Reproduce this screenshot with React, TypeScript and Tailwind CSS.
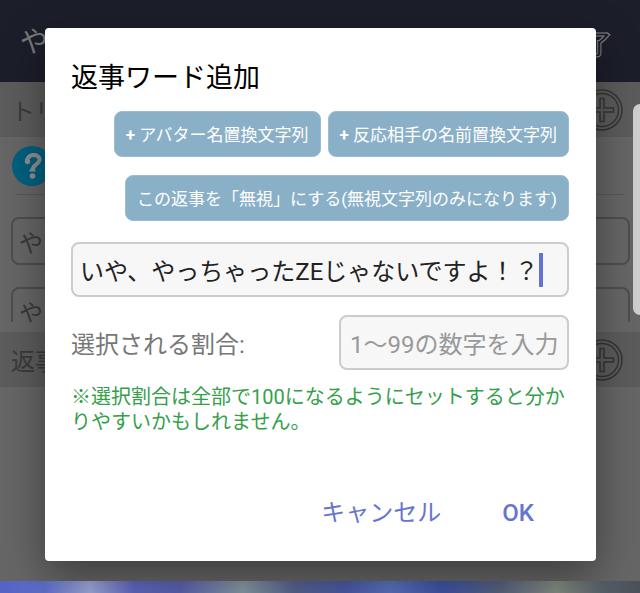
import React, { useState } from "react";

const TRIGGER_WORDS = ["やっ", "やっ"];

type SectionBarProps = {
  title: string;
  addLabel: string;
};

type DialogProps = {
  word: string;
  onWordChange: (value: string) => void;
  rate: string;
  onRateChange: (value: string) => void;
};

export default function App() {
  const [word, setWord] = useState("いや、やっちゃったZEじゃないですよ！？");
  const [rate, setRate] = useState("");

  return (
    <div className="relative flex min-h-screen flex-col overflow-hidden bg-[#666666] font-[Roboto,'Noto_Sans_CJK_JP',sans-serif] text-[#3a3a3a]">
      <header className="flex h-[82px] items-center justify-between bg-[#1c1e2a] pt-1 pr-7 pl-5 text-[#77777c]">
        <h1 className="text-[28px]">やっ</h1>
        <button
          type="button"
          className="pt-1 text-[26px] font-bold text-[#1c1e2a] [-webkit-text-stroke:1px_#85858a]"
        >
          完了
        </button>
      </header>
      <main className="flex flex-1 flex-col">
        <SectionBar title="トリガー" addLabel="トリガーワードを追加" />
        <div className="mx-4 flex h-[58px] items-center border-b border-[#585858] pr-2">
          <HelpIcon />
        </div>
        <div className="flex h-[127px] flex-col gap-[22px] overflow-hidden pt-[22px] pr-[10px] pl-[11px]">
          {TRIGGER_WORDS.map((trigger, index) => (
            <input
              key={index}
              aria-label="トリガーワード"
              defaultValue={trigger}
              className="h-12 w-full shrink-0 rounded-lg border-2 border-[#4e4e4e] px-1.5 text-2xl"
            />
          ))}
        </div>
        <div className="h-[10px]" />
        <SectionBar title="返事" addLabel="返事ワードを追加" />
      </main>
      <div className="h-3 bg-[linear-gradient(90deg,#5563c4_0%,#5f70cc_7%,#a0aadb_14%,#6067c0_21%,#5a62b0_28%,#8799a3_38%,#56638f_46%,#4a5aa5_54%,#5a72bd_61%,#3f53a6_69%,#56627e_78%,#868d83_87%,#56606a_94%,#4c5058_100%)]" />
      <div className="absolute top-[104px] right-0 h-[211px] w-[7px] rounded-l-lg bg-[#cfcfcf]" />
      <div className="absolute inset-0 flex items-start pt-7 pr-11 pl-[45px]">
        <ReplyWordDialog word={word} onWordChange={setWord} rate={rate} onRateChange={setRate} />
      </div>
    </div>
  );
}

function ReplyWordDialog({ word, onWordChange, rate, onRateChange }: DialogProps) {
  return (
    <div
      role="dialog"
      aria-labelledby="dialog-title"
      className="w-full rounded-sm bg-white pt-[30px] pr-[27px] pb-6 pl-[26px] shadow-[0_16px_44px_rgba(0,0,0,0.4)]"
    >
      <h2 id="dialog-title" className="text-[27px] leading-10 text-black">
        返事ワード追加
      </h2>
      <div className="mt-[13px] flex flex-wrap justify-end gap-x-[7px] gap-y-[18px]">
        <InsertButton>
          <b className="font-bold">+</b> アバター名置換文字列
        </InsertButton>
        <InsertButton>
          <b className="font-bold">+</b> 反応相手の名前置換文字列
        </InsertButton>
        <InsertButton>この返事を「無視」にする(無視文字列のみになります)</InsertButton>
      </div>
      <label className="mt-[21px] flex h-[55px] items-center rounded-lg border-2 border-[#cccccc] bg-[#f7f7f7] pl-[7px]">
        <input
          aria-label="返事ワード"
          value={word}
          onChange={(event) => onWordChange(event.target.value)}
          className="field-sizing-content pt-1 text-2xl text-[#222222] outline-none"
        />
        <span className="h-[34px] w-1 shrink-0 bg-[#6273d0]" />
      </label>
      <div className="mt-[18px] flex items-center justify-between">
        <label htmlFor="rate" className="pt-1 text-2xl text-[#777777]">
          選択される割合:
        </label>
        <input
          id="rate"
          value={rate}
          onChange={(event) => onRateChange(event.target.value)}
          placeholder="1〜99の数字を入力"
          className="h-[55px] w-[230px] rounded-lg border-2 border-[#cccccc] bg-[#f7f7f7] px-[9px] pt-1 text-2xl text-[#222222] placeholder:text-[#999999]"
        />
      </div>
      <p className="mt-[15px] text-xl leading-[25px] text-[#35a04a]">
        ※選択割合は全部で100になるようにセットすると分かりやすいかもしれません。
      </p>
      <div className="mt-[54px] flex justify-end gap-[5px] pr-[7px] text-2xl text-[#6675d0]">
        <button type="button" className="h-12 px-7">
          キャンセル
        </button>
        <button type="button" className="h-12 px-7 font-medium">
          OK
        </button>
      </div>
    </div>
  );
}

function InsertButton({ children }: { children: React.ReactNode }) {
  return (
    <button
      type="button"
      className="h-[46px] rounded-lg border border-[#9dbccf] bg-[#8ab0c8] px-[11px] pt-1 text-[17px] text-white"
    >
      {children}
    </button>
  );
}

function SectionBar({ title, addLabel }: SectionBarProps) {
  return (
    <div className="flex h-[55px] items-center justify-between bg-[#5c5c5c] pr-[17px] pl-[11px]">
      <h2 className="pt-1 text-2xl">{title}</h2>
      <button type="button" aria-label={addLabel}>
        <PlusIcon />
      </button>
    </div>
  );
}

function PlusIcon() {
  return (
    <svg width="42" height="42" viewBox="0 0 42 42" fill="none" stroke="#363636" strokeWidth="1.5">
      <circle cx="21" cy="21" r="20" />
      <circle cx="21" cy="21" r="16.5" />
      <path d="M19 9.5h4v9.5h9.5v4h-9.5v9.5h-4v-9.5h-9.5v-4h9.5z" />
    </svg>
  );
}

function HelpIcon() {
  return (
    <svg width="40" height="40" viewBox="0 0 40 40" className="-ml-1" role="img" aria-label="ヘルプ">
      <circle cx="20" cy="20" r="20" fill="#006080" />
      <path
        d="M15 16.500C14 7 28 7 27.500 14c-.5 4.500-7.500 5-7 10.500"
        fill="none"
        stroke="#909090"
        strokeWidth="4"
      />
      <circle cx="15.500" cy="15.500" r="2.700" fill="#909090" />
      <path d="M17.500 24.500h6" stroke="#909090" strokeWidth="2" />
      <circle cx="20.500" cy="30" r="2.800" fill="#909090" />
    </svg>
  );
}
